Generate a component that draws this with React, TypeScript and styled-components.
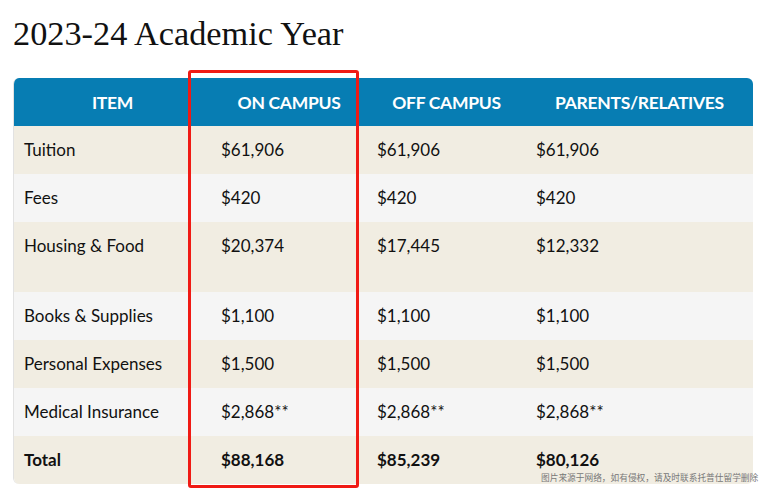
import React from "react";
import styled, { createGlobalStyle } from "styled-components";

const Global = createGlobalStyle`
  html, body { margin: 0; padding: 0; background: #ffffff; }
  body { font-family: "Lato", "Liberation Sans", sans-serif; }
`;

const Page = styled.div`
  position: relative;
  width: 761px;
  height: 489px;
  overflow: hidden;
  padding: 0 0 0 13px;
  box-sizing: border-box;
`;

const Title = styled.h1`
  margin: 0;
  padding-top: 14px;
  height: 78px;
  box-sizing: border-box;
  font-family: "Liberation Serif", serif;
  font-weight: 400;
  font-size: 34.3px;
  line-height: 38px;
  color: #111;
`;

const Table = styled.table`
  width: 739px;
  border-collapse: separate;
  border-spacing: 0;
  border-left: 1px solid #e2e2e2;
  border-radius: 6px;
  overflow: hidden;
  table-layout: fixed;
`;

const HeadCell = styled.th<{ $w: number }>`
  width: ${(p) => p.$w}px;
  height: 48px;
  padding: 0;
  background: #077db3;
  color: #fff;
  font-family: "Lato", sans-serif;
  font-weight: 700;
  font-size: 17.5px;
  letter-spacing: -0.3px;
  text-transform: uppercase;
  text-align: center;
  vertical-align: middle;
`;

const Row = styled.tr<{ $alt: boolean; $tall?: boolean }>`
  background: ${(p) => (p.$alt ? "#f5f5f5" : "#f1ede2")};
  height: ${(p) => (p.$tall ? 70 : 48)}px;
`;

const Cell = styled.td<{ $bold?: boolean }>`
  padding: 14px 0 0 10px;
  vertical-align: top;
  font-size: 17px;
  line-height: 20px;
  color: #111;
  font-weight: ${(p) => (p.$bold ? 700 : 400)};
  white-space: nowrap;
`;

const Highlight = styled.div`
  position: absolute;
  left: 188px;
  top: 70px;
  width: 171px;
  height: 418px;
  border: 3px solid #f01a14;
  border-radius: 3px;
  box-sizing: border-box;
  pointer-events: none;
`;

const Watermark = styled.div`
  position: absolute;
  left: 541px;
  top: 472px;
  font-family: "Noto Sans CJK SC", sans-serif;
  font-size: 8.7px;
  line-height: 12px;
  color: #777;
  white-space: nowrap;
`;

const columns = [
  { label: "Item", w: 197 },
  { label: "On Campus", w: 156 },
  { label: "Off Campus", w: 159 },
  { label: "Parents/Relatives", w: 227 },
];

const rows: { cells: string[]; tall?: boolean; bold?: boolean }[] = [
  { cells: ["Tuition", "$61,906", "$61,906", "$61,906"] },
  { cells: ["Fees", "$420", "$420", "$420"] },
  { cells: ["Housing & Food", "$20,374", "$17,445", "$12,332"], tall: true },
  { cells: ["Books & Supplies", "$1,100", "$1,100", "$1,100"] },
  { cells: ["Personal Expenses", "$1,500", "$1,500", "$1,500"] },
  { cells: ["Medical Insurance", "$2,868**", "$2,868**", "$2,868**"] },
  { cells: ["Total", "$88,168", "$85,239", "$80,126"], bold: true },
];

export default function App() {
  return (
    <Page>
      <Global />
      <Title>2023-24 Academic Year</Title>
      <Table>
        <thead>
          <tr>
            {columns.map((c) => (
              <HeadCell key={c.label} $w={c.w}>
                {c.label}
              </HeadCell>
            ))}
          </tr>
        </thead>
        <tbody>
          {rows.map((r, i) => (
            <Row key={r.cells[0]} $alt={i % 2 === 1} $tall={r.tall}>
              {r.cells.map((c, j) => (
                <Cell key={j} $bold={r.bold}>
                  {c}
                </Cell>
              ))}
            </Row>
          ))}
        </tbody>
      </Table>
      <Highlight />
      <Watermark>图片来源于网络，如有侵权，请及时联系托普仕留学删除</Watermark>
    </Page>
  );
}
